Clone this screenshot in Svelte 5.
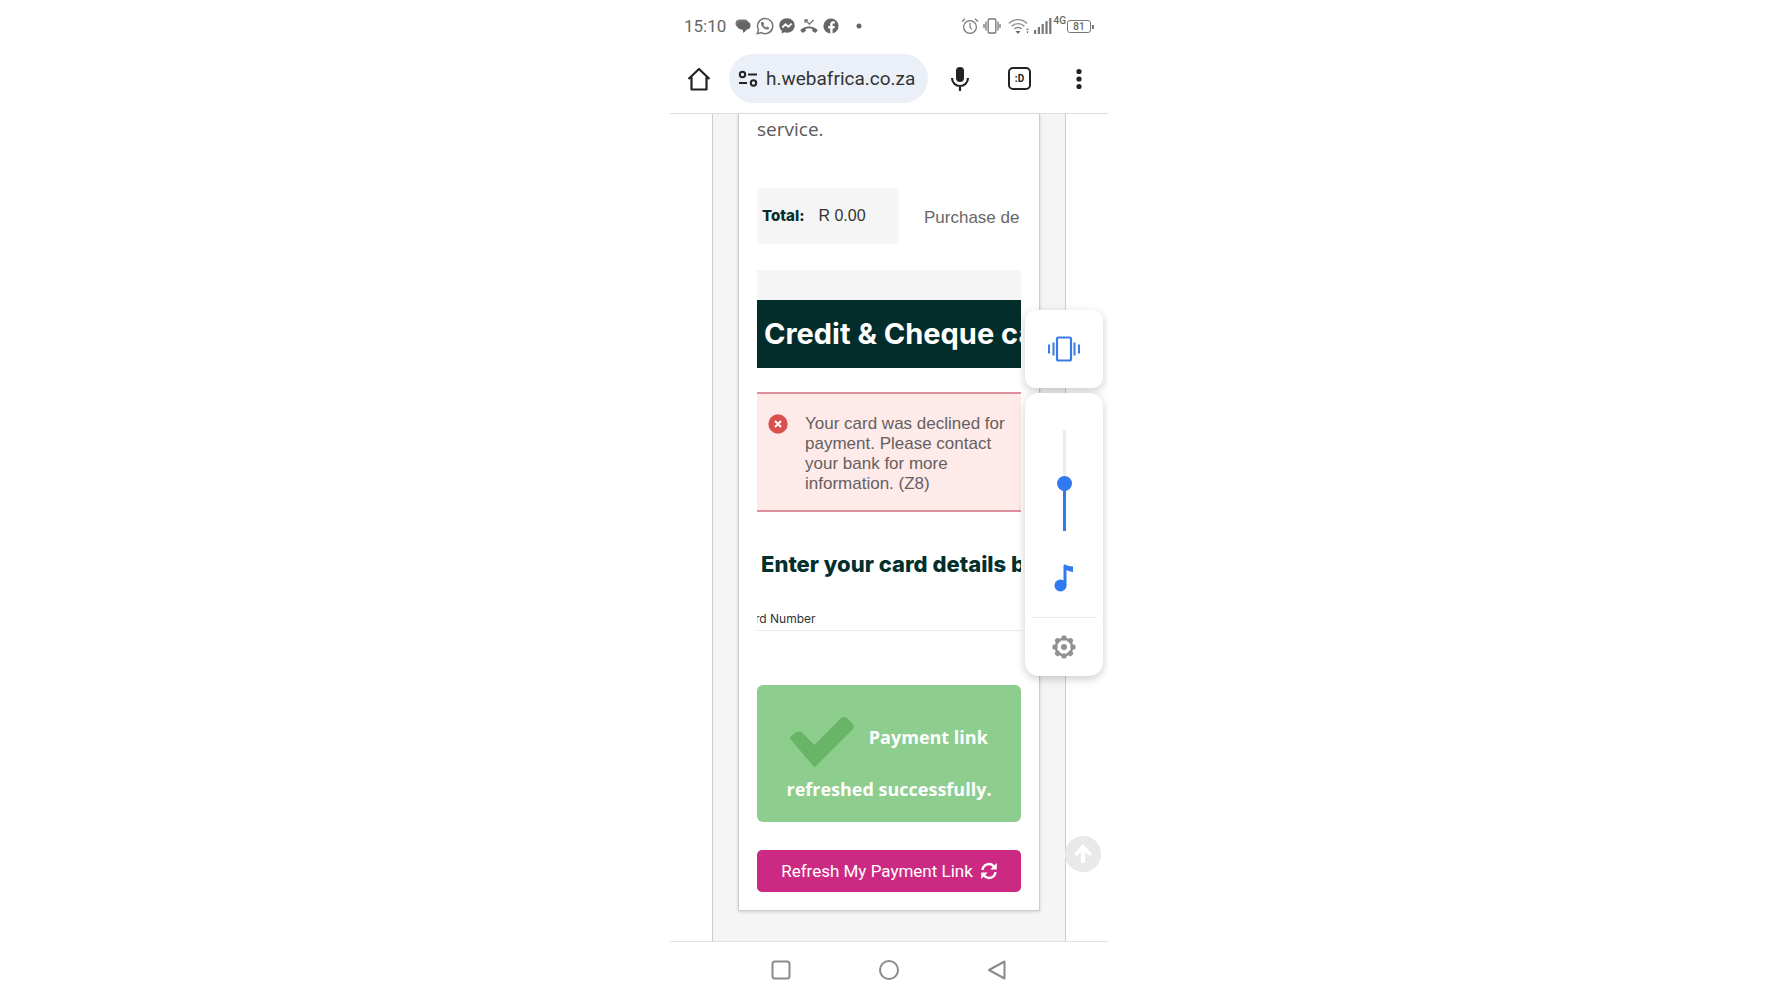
<script>
	let volume = $state(46);
	let cardNumber = $state("");

	const signalBars = [4, 7, 10, 13, 16];
	const gearTeeth = [0, 45, 90, 135, 180, 225, 270, 315];
</script>

<div class="phone">
	<header class="status-bar">
		<span class="clock">15:10</span>
		<div class="notifications">
			<svg width="16" height="16" viewBox="0 0 16 16">
				<path fill="#777" d="M4 1.500h6.500Q13 2 13 4L4 9.500Q.5 9 .5 5.500.5 2 4 1.500z" />
				<path fill="#666" d="M6 3.500h6Q15.500 4 15.500 7.500 15.500 11 12 11.500L8.500 15 7.500 11.500H6Q2.500 11 2.500 7.500 2.500 4 6 3.500z" />
			</svg>
			<svg width="18" height="18" viewBox="0 0 18 18" fill="none" stroke="#777">
				<path stroke-width="1.500" d="M1.300 16.700l1.200-4A7.600 7.600 0 1 1 5.300 15.600z" />
				<path fill="#777" stroke="none" d="M6 4.800l1.300.1.900 2-.8 1.100c.6 1.200 1.500 2 2.700 2.500l1-1.100 2 1c0 1.500-1 2.300-2.300 2.200C7.700 12 5 9 4.900 6.600c0-.8.500-1.500 1.100-1.800z" />
			</svg>
			<svg width="16" height="16" viewBox="0 0 16 16">
				<path fill="#666" d="M8 .3C3.700.3.300 3.400.3 7.500c0 2.200.9 4 2.500 5.300V15.500l2.400-1.200c.9.300 1.800.4 2.800.4 4.300 0 7.700-3.100 7.700-7.200S12.300.3 8 .3z" />
				<path fill="none" stroke="#fff" stroke-width="1.800" d="M3.300 9.500l3.200-3.200 2.800 2.400 3.400-3" />
			</svg>
			<svg width="18" height="16" viewBox="0 0 18 16">
				<path fill="none" stroke="#777" stroke-width="1.300" d="M5 5V2H8M5.500 2.500l4 3.500L13.500 2" />
				<path fill="#666" d="M9 8.500c3.500 0 6.300 1.300 8.300 3.300.4.400.4.800 0 1.200l-1.500 1.500c-.4.400-.8.400-1.200 0l-2.300-1.500v-2.300c-2-.7-4.500-.7-6.600 0V13l-2.300 1.500c-.4.400-.8.400-1.200 0L.7 13c-.4-.4-.4-.8 0-1.200C2.700 9.800 5.500 8.500 9 8.500z" />
			</svg>
			<svg width="16" height="16" viewBox="0 0 16 16">
				<circle cx="8" cy="8" r="7.600" fill="#666" />
				<path fill="#fff" d="M7.200 15.700v-5.300H5.200V8.100h2V6.500c0-2.100 1.200-3.200 3-3.200l1.700.1v2h-1.100c-1 0-1.200.5-1.200 1.200v1.500h2.200l-.4 2.300H9.600v5.300z" />
			</svg>
			<svg class="more-dot" width="6" height="6" viewBox="0 0 6 6">
				<circle cx="3" cy="3" r="2.500" fill="#666" />
			</svg>
		</div>
		<div class="system">
			<svg width="18" height="18" viewBox="0 0 18 18" fill="none" stroke="#777" stroke-width="1.200">
				<circle cx="9" cy="10" r="6.400" />
				<path d="M9 6v4l2 2.500M1 4.500L4 1.800M14 1.800l3 2.700" />
			</svg>
			<svg width="18" height="18" viewBox="0 0 18 18" fill="none" stroke="#777" stroke-width="1.300">
				<rect x="5.200" y="2" width="7.600" height="14" rx="1" />
				<path d="M3 4.500v9M1 7v4M15 4.500v9M17 7v4" />
			</svg>
			<svg class="wifi" width="22" height="18" viewBox="0 0 22 18" fill="none" stroke="#8a8a8a" stroke-width="1.400">
				<path d="M1 6.500a12.500 12.500 0 0 1 18 0M3.700 9.300a8.700 8.700 0 0 1 12.600 0M6.300 12a5.200 5.200 0 0 1 7.400 0" />
				<path fill="#666" stroke="none" d="M7.500 14h5L10 17zM18.300 13l1.200-2 1.200 2zM18.300 14.500h2.400l-1.200 2z" />
			</svg>
			<svg width="18" height="18" viewBox="0 0 18 18" fill="#777">
				{#each signalBars as height, i}
					<rect x={i * 3.8} y={17 - height} width="2.200" {height} />
				{/each}
			</svg>
			<span class="network">4G</span>
			<div class="battery"><span>81</span></div>
		</div>
	</header>

	<nav class="toolbar">
		<button class="icon-btn" aria-label="Home">
			<svg width="24" height="24" viewBox="0 0 24 24" fill="none" stroke="#222" stroke-width="2.200">
				<path stroke-linejoin="round" d="M1.500 12L12 2l10.500 10M4.500 10v12.500h15V10" />
			</svg>
		</button>
		<button class="url-bar">
			<svg width="20" height="18" viewBox="0 0 20 18" fill="none" stroke="#222" stroke-width="2">
				<circle cx="4.500" cy="4.500" r="2.700" />
				<path d="M10 4.500h9M1 13h8" />
				<circle cx="15.500" cy="13" r="2.700" />
			</svg>
			<span>h.webafrica.co.za</span>
		</button>
		<div class="toolbar-actions">
			<button class="icon-btn" aria-label="Voice search">
				<svg width="24" height="26" viewBox="0 0 24 26">
					<rect x="8" y="1" width="8" height="15" rx="4" fill="#222" />
					<path fill="none" stroke="#222" stroke-width="2.200" d="M4 12a8 8 0 0 0 16 0M12 20v5" />
				</svg>
			</button>
			<button class="tabs" aria-label="Tabs">:D</button>
			<button class="icon-btn" aria-label="Menu">
				<svg width="24" height="24" viewBox="0 0 24 24" fill="#222">
					<circle cx="12" cy="4.500" r="2.600" />
					<circle cx="12" cy="12" r="2.600" />
					<circle cx="12" cy="19.500" r="2.600" />
				</svg>
			</button>
		</div>
	</nav>

	<main class="page">
		<section class="card">
			<p class="intro">service.</p>

			<div class="summary">
				<div class="total">
					<strong>Total:</strong>
					<span>R 0.00</span>
				</div>
				<span class="purchase">Purchase de</span>
			</div>

			<div class="method">
				<h1>Credit &amp; Cheque ca</h1>
			</div>

			<div class="alert" role="alert">
				<svg width="20" height="20" viewBox="0 0 20 20">
					<circle cx="10" cy="10" r="9.700" fill="#d9504f" />
					<path stroke="#fff" stroke-width="2" d="M7 7l6 6M13 7l-6 6" />
				</svg>
				<p>Your card was declined for payment. Please contact your bank for more information. (Z8)</p>
			</div>

			<h2>Enter your card details b</h2>

			<div class="field">
				<label for="card-number">rd Number</label>
				<input id="card-number" type="text" inputmode="numeric" bind:value={cardNumber} />
			</div>

			<div class="success" role="status">
				<svg width="64" height="52" viewBox="0 0 64 52">
					<path fill="#68b567" d="M1.500 24.500Q-1 22 1.500 19.500L6 16.500Q9.500 14.500 12.500 17L24.500 29 51 2Q54 0 57 2L63 8Q65 11 62.500 13.500L24.500 51.500z" />
				</svg>
				Payment link refreshed successfully.
			</div>

			<button class="refresh">
				<span>Refresh My Payment Link</span>
				<svg width="16" height="18" viewBox="0 0 16 18" fill="none" stroke="#fff" stroke-width="2.400">
					<path d="M1.500 8A6.500 6.500 0 0 1 13 4.500M14.500 10A6.500 6.500 0 0 1 3 13.500" />
					<path fill="#fff" stroke="none" d="M15.800 1v6.500H9.300zM.2 17v-6.500h6.500z" />
				</svg>
			</button>
		</section>
	</main>

	<footer class="nav-bar">
		<button class="icon-btn" aria-label="Recent apps">
			<svg width="22" height="22" viewBox="0 0 22 22" fill="none" stroke="#8a8a8a" stroke-width="2">
				<rect x="2.500" y="2.500" width="17" height="17" rx="2.500" />
			</svg>
		</button>
		<button class="icon-btn" aria-label="Home screen">
			<svg width="22" height="22" viewBox="0 0 22 22" fill="none" stroke="#8a8a8a" stroke-width="2">
				<circle cx="11" cy="11" r="9" />
			</svg>
		</button>
		<button class="icon-btn" aria-label="Back">
			<svg width="22" height="22" viewBox="0 0 22 22" fill="none" stroke="#8a8a8a" stroke-width="2" stroke-linejoin="round">
				<path d="M18.500 2.500v17L3 11z" />
			</svg>
		</button>
	</footer>

	<button class="to-top" aria-label="Scroll to top">
		<svg width="20" height="20" viewBox="0 0 20 20">
			<path fill="#fff" d="M10 0l9 9.500-2.500 2.500-4.300-4V19H7.800V8l-4.300 4L1 9.500z" />
		</svg>
	</button>

	<!-- Volume overlay -->
	<aside class="volume">
		<button class="ringer" aria-label="Vibrate">
			<svg width="34" height="26" viewBox="0 0 34 26" fill="none" stroke="#3c7be6">
				<rect x="10" y="1.500" width="14" height="23" rx="1.500" stroke-width="2.200" />
				<path stroke-width="2" d="M2 8.500v9M6.500 6.500v13M27.500 6.500v13M32 8.500v9" />
			</svg>
		</button>
		<div class="levels">
			<input
				type="range"
				aria-label="Media volume"
				min="0"
				max="100"
				bind:value={volume}
				style="--fill: {volume}%"
			/>
			<svg class="note" width="20" height="28" viewBox="0 0 20 28" fill="#3079ee">
				<circle cx="6.500" cy="21.500" r="6" />
				<path d="M9.500 1.500Q9.500 0 11 0.500 14 2.500 19 2.500v5.500Q15 7.500 12.500 6v15.500h-3z" />
			</svg>
			<button class="settings" aria-label="Sound settings">
				<svg width="26" height="26" viewBox="0 0 26 26">
					{#each gearTeeth as angle}
						<rect x="10.500" y="1.500" width="5" height="5" rx="1.500" fill="#909090" transform="rotate({angle} 13 13)" />
					{/each}
					<circle cx="13" cy="13" r="8.200" fill="none" stroke="#909090" stroke-width="2.400" />
					<circle cx="13" cy="13" r="3" fill="#909090" />
				</svg>
			</button>
		</div>
	</aside>
</div>

<style>
	:global(body) {
		margin: 0;
		background: #fff;
	}

	button {
		margin: 0;
		padding: 0;
		border: none;
		background: none;
		font: inherit;
		cursor: pointer;
	}
	svg {
		display: block;
		flex-shrink: 0;
	}

	.phone {
		position: relative;
		display: flex;
		flex-direction: column;
		width: 100%;
		max-width: 438px;
		min-height: 100vh;
		margin: 0 auto;
		overflow: hidden;
		font-family: Roboto, sans-serif;
	}

	/* Android status bar */
	.status-bar {
		display: flex;
		align-items: center;
		justify-content: space-between;
		height: 52px;
		padding: 0 14px;
		color: #666;
	}
	.clock {
		margin-right: 9px;
		font-size: 17px;
	}
	.notifications {
		display: flex;
		align-items: center;
		gap: 5px;
		margin-right: auto;
	}
	.more-dot { margin-left: 12px; }
	.system {
		display: flex;
		align-items: center;
		gap: 4px;
	}
	.wifi { margin-left: 3px; }
	.network {
		align-self: flex-start;
		margin-left: -2px;
		font-size: 10px;
		font-weight: 500;
		line-height: 8px;
	}
	.battery {
		position: relative;
		width: 22px;
		height: 11px;
		margin: 0 3px 0 -3px;
		border: 1px solid #777;
		border-radius: 3px;
		font-size: 10px;
		font-weight: 500;
		line-height: 11px;
		text-align: center;
	}
	.battery::after {
		content: "";
		position: absolute;
		top: 4px;
		right: -4px;
		width: 2px;
		height: 4px;
		background: #777;
	}

	/* Browser toolbar */
	.toolbar {
		display: flex;
		align-items: center;
		padding: 2px 17px 10px;
		border-bottom: 1px solid #dedede;
	}
	.url-bar {
		flex: 1;
		display: flex;
		align-items: center;
		gap: 8px;
		height: 49px;
		margin: 0 20px 0 18px;
		padding: 0 9px;
		border-radius: 25px;
		background: #ebf0f8;
		color: #333;
		font-size: 19px;
		white-space: nowrap;
	}
	.toolbar-actions {
		display: flex;
		align-items: center;
		gap: 36px;
	}
	.tabs {
		width: 23px;
		height: 23px;
		border: 2px solid #222;
		border-radius: 5px;
		color: #222;
		font-size: 10px;
		font-weight: 700;
		line-height: 18px;
	}

	/* Web page */
	.page {
		flex: 1;
		margin: 0 42px;
		padding: 0 25px 28px;
		border: solid #ccc;
		border-width: 0 1px;
		background: #f5f5f5;
	}
	.card {
		display: flex;
		flex-direction: column;
		padding: 1px 18px 18px;
		border: solid #ccc;
		border-width: 0 1px 1px;
		background: #fff;
		box-shadow: 0 1px 3px rgba(0, 0, 0, 0.15);
	}
	.intro {
		margin: 0 0 45px;
		color: #5a5a5a;
		font-family: "Open Sans", sans-serif;
		font-size: 19px;
		line-height: 28px;
	}
	.summary {
		display: flex;
		align-items: center;
		gap: 25px;
		overflow: hidden;
		font-family: "Liberation Sans", Arial, sans-serif;
		white-space: nowrap;
	}
	.total {
		display: flex;
		align-items: baseline;
		flex: 0 0 137px;
		gap: 14px;
		height: 38px;
		padding: 18px 0 0 5px;
		border-radius: 4px;
		background: #f5f5f5;
		color: #333;
		font-size: 16px;
	}
	.total strong {
		color: #03302c;
		font-family: Inter, sans-serif;
		font-size: 15px;
		font-weight: 800;
	}
	.purchase {
		padding-top: 3px;
		color: #666;
		font-size: 17px;
	}
	.method {
		margin-top: 26px;
		padding-top: 30px;
		background: #f5f5f5;
	}
	h1 {
		margin: 0;
		padding-left: 7px;
		overflow: hidden;
		background: #032d2b;
		color: #fff;
		font-family: Inter, sans-serif;
		font-size: 29px;
		font-weight: 700;
		line-height: 68px;
		white-space: nowrap;
	}
	.alert {
		display: flex;
		gap: 17px;
		margin-top: 24px;
		padding: 20px 10px 16px 11px;
		border: solid #dd8e9b;
		border-width: 2px 0;
		background: #fdeae9;
	}
	.alert p {
		margin: 0;
		color: #666060;
		font-family: "Liberation Sans", Arial, sans-serif;
		font-size: 17px;
		line-height: 20px;
	}
	h2 {
		margin: 38px 0 28px;
		padding-left: 4px;
		overflow: hidden;
		color: #03302c;
		font-family: Inter, sans-serif;
		font-size: 22px;
		font-weight: 800;
		line-height: 28px;
		white-space: nowrap;
	}
	.field {
		display: flex;
		align-items: center;
		height: 24px;
		overflow: hidden;
		border-bottom: 1px solid #e8e8e8;
	}
	.field label {
		margin-left: -2px;
		color: #333;
		font-family: Inter, sans-serif;
		font-size: 12px;
		white-space: nowrap;
	}
	.field input {
		flex: 1;
		min-width: 0;
		padding: 0 8px;
		border: none;
		outline: none;
		background: none;
		font-size: 12px;
	}
	.success {
		margin-top: 54px;
		padding: 31px 24px 12px;
		border-radius: 6px;
		background: #8dcd8e;
		color: #fff;
		font-family: "Open Sans", sans-serif;
		font-size: 18px;
		font-weight: 700;
		line-height: 42px;
		text-align: center;
	}
	.success svg {
		display: inline-block;
		margin-right: 10px;
		vertical-align: -24px;
	}
	.refresh {
		display: flex;
		align-items: center;
		justify-content: center;
		gap: 8px;
		height: 42px;
		margin-top: 28px;
		border-radius: 5px;
		background: #cc2a82;
		color: #fff;
		font-size: 17px;
	}

	/* Android navigation */
	.nav-bar {
		display: flex;
		justify-content: center;
		gap: 86px;
		padding: 17px 0 19px;
		border-top: 1px solid #e2e2e2;
	}

	/* Floating controls */
	.to-top {
		position: absolute;
		right: 7px;
		bottom: 128px;
		display: flex;
		align-items: center;
		justify-content: center;
		width: 36px;
		height: 36px;
		border-radius: 50%;
		background: #e9e9e9;
	}
	.volume {
		position: absolute;
		top: 310px;
		right: 5px;
		display: flex;
		flex-direction: column;
		gap: 5px;
		width: 78px;
	}
	.ringer,
	.levels {
		display: flex;
		align-items: center;
		background: #fff;
		box-shadow: 0 3px 10px rgba(0, 0, 0, 0.2);
	}
	.ringer {
		justify-content: center;
		height: 78px;
		border-radius: 10px;
	}
	.levels {
		flex-direction: column;
		padding: 37px 6px 0;
		border-radius: 14px;
	}
	.levels input {
		width: 16px;
		height: 101px;
		margin: 0;
		appearance: none;
		background: linear-gradient(to top, #3079ee var(--fill), #ececec var(--fill)) center / 3px 100% no-repeat;
		writing-mode: vertical-lr;
		direction: rtl;
	}
	.levels input::-webkit-slider-thumb {
		width: 15px;
		height: 15px;
		appearance: none;
		border-radius: 50%;
		background: #3079ee;
	}
	.note { margin: 33px 0 25px; }
	.settings {
		display: flex;
		align-items: center;
		justify-content: center;
		width: 100%;
		height: 59px;
		border-top: 1px solid #e8e8e8;
	}
</style>
